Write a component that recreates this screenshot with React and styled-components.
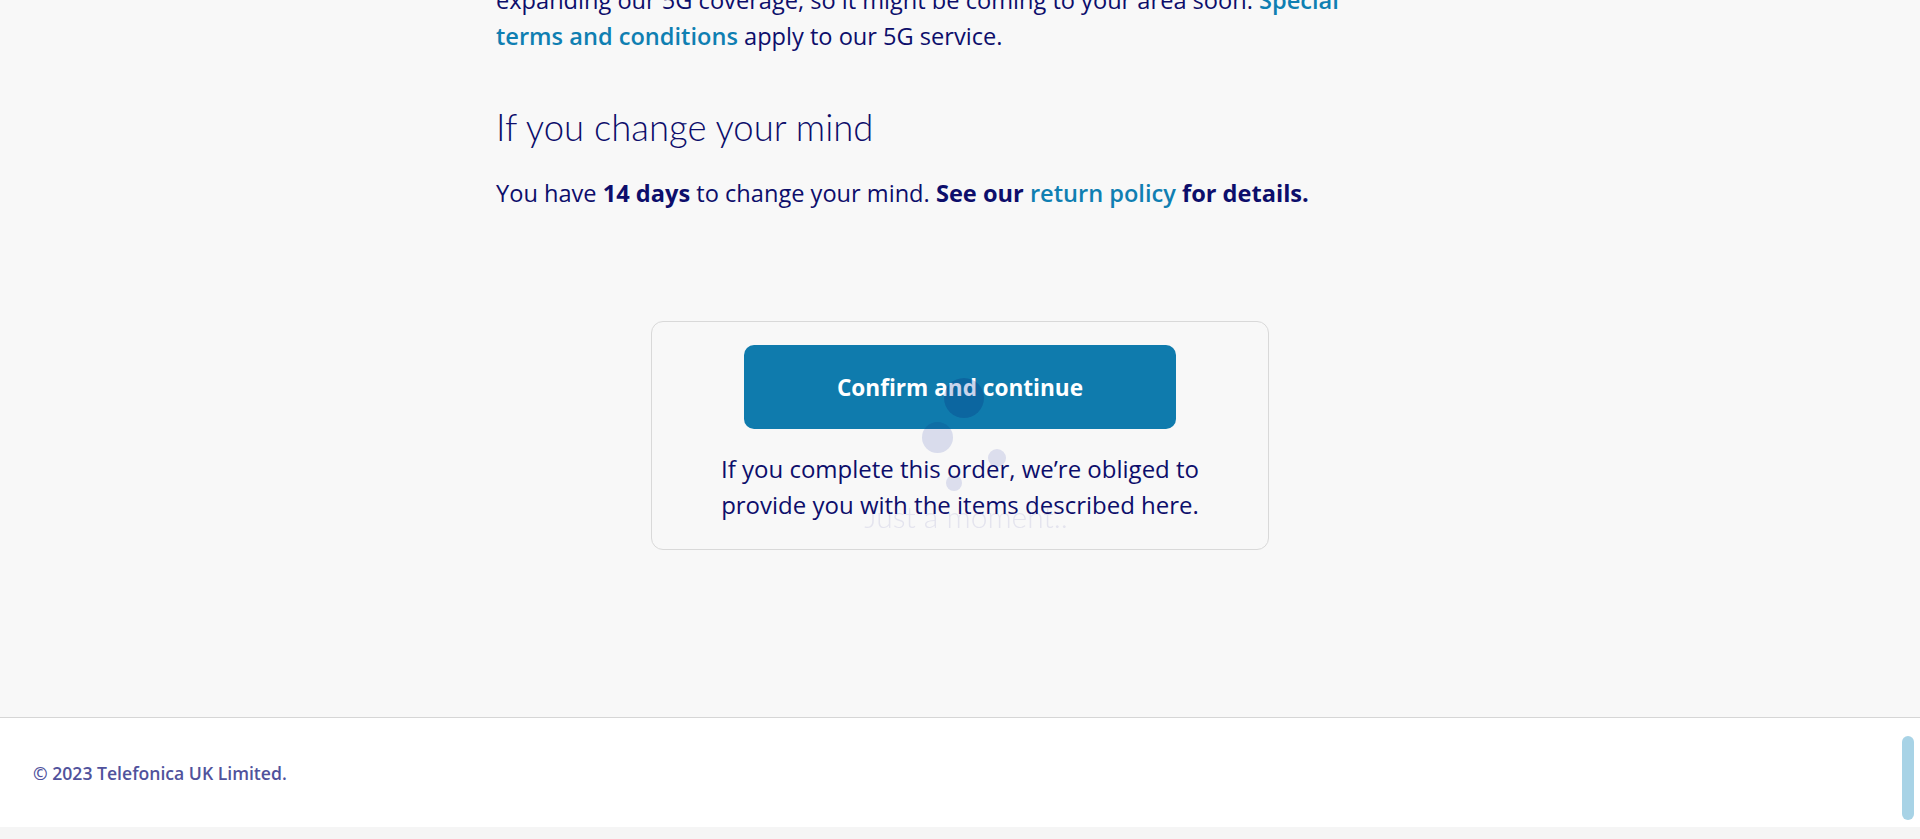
import styled, { createGlobalStyle } from "styled-components";

const GlobalStyle = createGlobalStyle`
  html, body {
    margin: 0;
    padding: 0;
    background: #f5f5f5;
    overflow: hidden;
  }
  * {
    box-sizing: border-box;
  }
`;

const Page = styled.div`
  display: flex;
  flex-direction: column;
  font-family: "Open Sans", "Liberation Sans", sans-serif;
  color: #0d0e6b;
`;

const Main = styled.main`
  background: #f8f8f8;
  padding-bottom: 167px;
  overflow: hidden;
`;

const Column = styled.div`
  width: 928px;
  margin: 0 auto;
  display: flex;
  flex-direction: column;
`;

const Text = styled.p`
  margin: ${(p) => p.$margin || "0"};
  max-width: ${(p) => p.$max || "none"};
  font-size: 23.6px;
  line-height: 36px;
`;

const Strong = styled.strong`
  font-weight: 700;
`;

const Link = styled.a`
  color: #0f7fb2;
  text-decoration: none;
  font-weight: ${(p) => p.$weight || 400};
`;

const Heading = styled.h2`
  margin: 51px 0 0;
  font-family: Lato, "Liberation Sans", sans-serif;
  font-weight: 300;
  font-size: 36.5px;
  line-height: 44px;
  color: #0d0e6b;
`;

const Card = styled.section`
  align-self: center;
  width: 618px;
  margin-top: 110px;
  padding: 23px 0 26px;
  border: 1px solid #d9d9d9;
  border-radius: 12px;
  display: flex;
  flex-direction: column;
  align-items: center;
`;

const PrimaryButton = styled.button`
  width: 432px;
  height: 84px;
  border: none;
  border-radius: 10px;
  background: #0f7bad;
  color: #ffffff;
  font-family: "Open Sans", "Liberation Sans", sans-serif;
  font-weight: 700;
  font-size: 22.6px;
  cursor: pointer;
`;

const Note = styled.p`
  margin: 22px 0 0;
  max-width: 500px;
  text-align: center;
  font-size: 24px;
  line-height: 36px;
`;

const Footer = styled.footer`
  height: 110px;
  margin-bottom: 12px;
  background: #ffffff;
  border-top: 1px solid #d6d6d6;
  display: flex;
  align-items: center;
  padding-left: 33px;
`;

const Copyright = styled.span`
  font-size: 17.6px;
  font-weight: 600;
  color: #50529c;
`;

const ScrollThumb = styled.div`
  position: fixed;
  right: 6px;
  top: 736px;
  width: 12px;
  height: 84px;
  border-radius: 6px;
  background: #a8d3e6;
`;

/* fading "just a moment" loader that sits over the page */
const Overlay = styled.div`
  position: fixed;
  inset: 0;
  z-index: 10;
  pointer-events: none;
  mix-blend-mode: multiply;
  display: flex;
  flex-direction: column;
  align-items: center;
  padding: 378px 0 0 12px;
`;

const Dots = styled.div`
  position: relative;
  width: 100px;
  height: 120px;
`;

const Dot = styled.span`
  position: absolute;
  left: ${(p) => p.$x}px;
  top: ${(p) => p.$y}px;
  width: ${(p) => p.$size}px;
  height: ${(p) => p.$size}px;
  border-radius: 50%;
  background: ${(p) => p.$color || "#e3e5f4"};
`;

const LoaderText = styled.div`
  font-family: Lato, "Liberation Sans", sans-serif;
  font-weight: 300;
  font-size: 30px;
  line-height: 36px;
  color: #ebebf5;
`;

const dots = [
  { x: 28, y: 0, size: 40, color: "#c9d4ec" },
  { x: 5.5, y: 43.5, size: 31, color: "#e0e3f3" },
  { x: 72, y: 71, size: 18 },
  { x: 30, y: 97, size: 16 },
];

export default function App() {
  return (
    <>
      <GlobalStyle />
      <Page>
        <Main>
          <Column>
            <Text $margin="-18px 0 0" $max="900px">
              expanding our 5G coverage, so it might be coming to your area
              soon.{" "}
              <Link href="#" $weight={600}>
                Special terms and conditions
              </Link>{" "}
              apply to our 5G service.
            </Text>
            <Heading>If you change your mind</Heading>
            <Text $margin="26px 0 0">
              You have <Strong>14 days</Strong> to change your mind.{" "}
              <Strong>See our</Strong>{" "}
              <Link href="#" $weight={600}>
                return policy
              </Link>{" "}
              <Strong>for details.</Strong>
            </Text>
            <Card>
              <PrimaryButton type="button">Confirm and continue</PrimaryButton>
              <Note>
                If you complete this order, we’re obliged to provide you with
                the items described here.
              </Note>
            </Card>
          </Column>
        </Main>
        <Footer>
          <Copyright>© 2023 Telefonica UK Limited.</Copyright>
        </Footer>
      </Page>
      <Overlay>
        <Dots>
          {dots.map((d, i) => (
            <Dot key={i} $x={d.x} $y={d.y} $size={d.size} $color={d.color} />
          ))}
        </Dots>
        <LoaderText>Just a moment..</LoaderText>
      </Overlay>
      <ScrollThumb />
    </>
  );
}
